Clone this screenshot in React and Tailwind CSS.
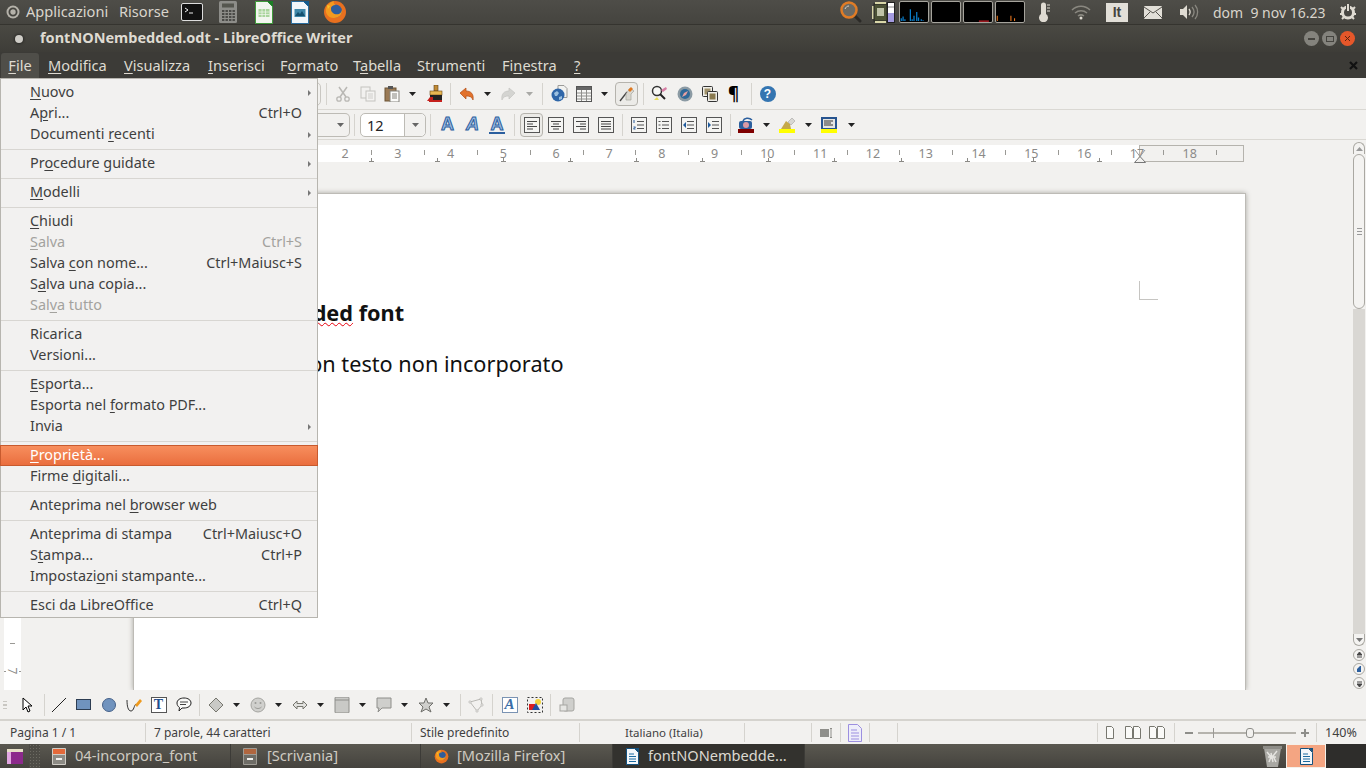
import React from 'react';

const Svg = ({ w = 16, h = 16, children, className = '' }) => (
  <svg width={w} height={h} viewBox={`0 0 ${w} ${h}`} className={`block shrink-0 ${className}`}>{children}</svg>
);

const Slot = ({ className = 'w-[25px]', children }) => (
  <div className={`flex h-full shrink-0 items-center justify-center ${className}`}>{children}</div>
);

const Caret = ({ color = '#222' }) => (
  <Svg w={7} h={4}><path d="M0 0h7L3.5 4z" fill={color} /></Svg>
);

const Sep = ({ className = '' }) => <div className={`h-[22px] w-px shrink-0 bg-[#d5d3ce] ${className}`} />;

/* ---- panel icons ---- */
const UbuntuGear = () => (
  <Svg w={14} h={14}>
    <circle cx="7" cy="7" r="6.5" fill="#b5b2aa" />
    <circle cx="7" cy="7" r="3.6" fill="none" stroke="#45443f" strokeWidth="1.8" />
  </Svg>
);
const Terminal = () => (
  <Svg w={22} h={18}>
    <rect x=".5" y=".5" width="21" height="17" rx="1.5" fill="#111" stroke="#ddd" />
    <path d="M4 5l3 2-3 2" fill="none" stroke="#eee" />
    <path d="M8 10h4" stroke="#eee" />
  </Svg>
);
const Calculator = () => (
  <Svg w={18} h={22}>
    <rect width="18" height="22" rx="1.5" fill="#8d8d89" />
    <rect x="3" y="2.5" width="12" height="4" fill="#55564f" />
    {[9, 12, 15, 18].map(y => [3, 6.5, 10, 13.5].map(x => <rect key={`${x}-${y}`} x={x} y={y} width="2.4" height="2" fill="#4a4a47" />))}
  </Svg>
);
const CalcDoc = () => (
  <Svg w={18} h={23}>
    <path d="M.5.5h12l5 5v17H.5z" fill="#f2f6ef" stroke="#3f9b3a" />
    <path d="M12 0h6v6z" fill="#1c7d26" />
    <rect x="3.5" y="8" width="11" height="8" fill="#a9d59c" />
    <path d="M3.5 11h11M3.5 13.5h11M7 8v8M10.500 8v8" stroke="#f4f8f0" strokeWidth=".7" />
  </Svg>
);
const ImpressDoc = () => (
  <Svg w={18} h={23}>
    <path d="M.5.5h12l5 5v17H.5z" fill="#f2f6fa" stroke="#2a6d9e" />
    <path d="M12 0h6v6z" fill="#155a8c" />
    <rect x="3.5" y="8" width="11" height="8" fill="#3f87a9" />
    <path d="M4 15l3-4 2 2 2-3 3 5z" fill="#14506f" />
  </Svg>
);
const WriterDoc = ({ w = 13, h = 17, line = '#1a6aa0' }) => (
  <svg width={w} height={h} viewBox="0 0 13 17" className="block shrink-0">
    <path d="M.5.5h8l4 4v12H.5z" fill="#f4f7fa" stroke="#14527f" />
    <path d="M8.500 0H13v4.500z" fill="#14527f" />
    <path d="M3 6h5M3 8.500h7M3 11h7M3 13.500h7" stroke={line} strokeWidth="1.200" />
  </svg>
);
const Firefox = ({ s = 24 }) => (
  <svg width={s} height={s} viewBox="0 0 24 24" className="block shrink-0">
    <circle cx="12" cy="12" r="11" fill="#e8701f" />
    <circle cx="12.500" cy="11" r="6.500" fill="#2f5d9b" />
    <path d="M3 9c1-4 4-7 8-8-1 2 0 3 2 4-3 0-5 1-5 4 0 4 4 6 8 5 2-1 3-3 3-5 1 5-3 9-8 9-6 0-9-5-8-9z" fill="#f39a1f" />
    <path d="M4 5c1 0 2 1 3 1L5 9z" fill="#f7c32a" />
  </svg>
);
const Search = () => (
  <Svg w={22} h={22}>
    <path d="M13 13l7 7" stroke="#2b2a27" strokeWidth="3" strokeLinecap="round" />
    <circle cx="9" cy="9" r="7.500" fill="#6b6a64" stroke="#e07c26" strokeWidth="2.500" />
    <path d="M5 8c1-2 2-3 4-3" stroke="#d8d5cc" fill="none" />
  </Svg>
);
const Chip = () => (
  <Svg w={23} h={21}>
    <rect x="0" y="4" width="2" height="13" fill="#d8d6a8" />
    <rect x="2" y="2" width="13" height="17" fill="#4c5236" stroke="#222" />
    <rect x="5" y="6" width="7" height="8" fill="#bfc3a8" />
    <rect x="3" y="0" width="11" height="2" fill="#d8d6a8" />
    <rect x="3" y="19" width="11" height="2" fill="#d8d6a8" />
    <rect x="15.500" y=".5" width="7" height="20" fill="#fff" stroke="#222" />
    <path d="M16 11h6v9h-6z" fill="#a49be0" />
    <path d="M16 5h6" stroke="#888" />
  </Svg>
);
const Graph = ({ children }) => (
  <svg width="30" height="22" viewBox="0 0 30 22" className="block shrink-0 rounded-[2px] border border-[#a5a39c] bg-black">{children}</svg>
);
const Thermo = () => (
  <Svg w={13} h={20}>
    <path d="M3 3a2.500 2.500 0 015 0v9a4.500 4.500 0 11-5 0z" fill="#dfdbd2" />
    <path d="M9 3h3M9 6h3M9 9h3" stroke="#dfdbd2" />
  </Svg>
);
const Wifi = () => (
  <Svg w={20} h={16}>
    <path d="M1 6c5-5 13-5 18 0M4 9c3.500-3 8.500-3 12 0M7 12c2-1.500 4-1.500 6 0" fill="none" stroke="#8a8880" strokeWidth="1.500" />
    <circle cx="10" cy="14" r="1.500" fill="#dfdbd2" />
  </Svg>
);
const Mail = () => (
  <Svg w={18} h={13}>
    <rect width="18" height="13" rx="1" fill="#e2dfd8" />
    <path d="M0 1l9 6 9-6M0 12l6-6M18 12l-6-6" fill="none" stroke="#55534d" />
  </Svg>
);
const Volume = () => (
  <Svg w={20} h={16}>
    <path d="M1 5h3l4-4v14l-4-4H1z" fill="#dfdbd2" />
    <path d="M10 5c1.500 2 1.500 4 0 6" stroke="#dfdbd2" strokeWidth="1.300" fill="none" />
    <path d="M13 3c2.500 3 2.500 7 0 10M16 1c3.500 4 3.500 10 0 14" stroke="#8a8880" strokeWidth="1.300" fill="none" />
  </Svg>
);
const Power = () => (
  <Svg w={18} h={18}>
    <circle cx="9" cy="9.500" r="5.500" fill="none" stroke="#dfdbd2" strokeWidth="3" />
    <path d="M9 1v7" stroke="#45443f" strokeWidth="4" />
    <path d="M9 1v7" stroke="#dfdbd2" strokeWidth="2" />
    <path d="M2 4l2 2M16 4l-2 2M1 11h2M15 11h2M3 16l2-2M15 16l-2-2" stroke="#dfdbd2" strokeWidth="2" />
  </Svg>
);

/* ---- toolbar icons ---- */
const Cut = () => (
  <Svg>
    <path d="M4 1l7 10M12 1L5 11" stroke="#b9b8b4" strokeWidth="1.500" />
    <circle cx="4" cy="13" r="2.200" fill="none" stroke="#b9b8b4" strokeWidth="1.300" />
    <circle cx="12" cy="13" r="2.200" fill="none" stroke="#b9b8b4" strokeWidth="1.300" />
  </Svg>
);
const Copy = () => (
  <Svg>
    <rect x="1" y="1" width="9" height="11" fill="#f2f1ef" stroke="#c4c3bf" />
    <rect x="6" y="5" width="9" height="10" fill="#f4f3f1" stroke="#c4c3bf" />
    <path d="M8 8h5M8 10h5M8 12h5" stroke="#cfcecb" />
  </Svg>
);
const Paste = () => (
  <Svg>
    <rect x="1" y="2" width="11" height="13" fill="#9a7a55" stroke="#6d5535" />
    <rect x="4" y="0" width="5" height="3" fill="#555" />
    <rect x="6" y="5" width="9" height="11" fill="#fbfbf9" stroke="#85837d" />
    <path d="M8 8h5M8 10h5M8 12h5" stroke="#85837d" />
  </Svg>
);
const Brush = () => (
  <Svg w={17} h={17}>
    <rect x="7" y="0" width="4" height="6" fill="#c08a35" stroke="#5d4018" strokeWidth=".6" />
    <rect x="3" y="6" width="12" height="4" fill="#e8b752" stroke="#6a4a1a" strokeWidth=".6" />
    <rect x="3" y="10" width="12" height="5" fill="#222" />
    <path d="M0 16l3-4h3v4z" fill="#c5201c" />
    <rect x="2" y="15" width="13" height="2" fill="#c5201c" />
  </Svg>
);
const Undo = ({ color = '#e2722c', dark = '#b24d15' }) => (
  <Svg>
    <path d="M1 7l6-5v3c5 0 8 3 7 9-1-3-3-4-7-4v3z" fill={color} stroke={dark} strokeWidth=".7" />
  </Svg>
);
const Globe = () => (
  <Svg w={17} h={17}>
    <path d="M7 .5h6l3 3v9H7z" fill="#f2f2f0" stroke="#9b9b98" />
    <circle cx="7" cy="10" r="6.500" fill="#2f66a8" />
    <path d="M3 8l3-2 2 2-2 3-2 0zM8 12l3-1 0 3-3 1z" fill="#9cc0df" />
  </Svg>
);
const TableIcon = () => (
  <Svg>
    <rect x=".5" y=".5" width="15" height="15" fill="#f7f7f5" stroke="#555" />
    <rect x="1" y="1" width="14" height="3" fill="#666" />
    <path d="M1 7h14M1 10h14M1 13h14M5.500 4v11M10.500 4v11" stroke="#8f8f8c" />
  </Svg>
);
const Draw = () => (
  <Svg>
    <path d="M1 15l7-9" stroke="#444" strokeWidth="1.300" />
    <path d="M7 8l4-6 4 3-3 3v6H7z" fill="#d9d7d0" stroke="#a5a39b" strokeWidth=".7" />
    <path d="M9 4l3-3 2 2-3 3z" fill="#e0781e" />
  </Svg>
);
const FindIcon = () => (
  <Svg w={17} h={17}>
    <circle cx="6" cy="6" r="4.500" fill="#f8f8f6" stroke="#333" strokeWidth="1.500" />
    <path d="M9 9l5 5" stroke="#222" strokeWidth="2" />
    <path d="M10 5l5-3 1 2-4 3z" fill="#d77fa5" />
    <path d="M6 12l-3 3h5z" fill="#e8dd5b" />
  </Svg>
);
const Compass = () => (
  <Svg>
    <circle cx="8" cy="8" r="7.500" fill="#8b9aa3" />
    <circle cx="8" cy="8" r="5" fill="#2f6897" />
    <path d="M11 5L9 9 5 11l2-4z" fill="#e9a0a0" />
  </Svg>
);
const Gallery = () => (
  <Svg>
    <rect x=".5" y=".5" width="10" height="10" rx="1" fill="#efeee9" stroke="#333" />
    <rect x="2.500" y="2.500" width="6" height="6" fill="#a0916a" />
    <rect x="5.500" y="5.500" width="10" height="10" rx="1" fill="#efeee9" stroke="#333" />
    <rect x="7.500" y="7.500" width="6" height="6" fill="#8a7a4f" />
  </Svg>
);
const Help = () => (
  <div className="flex h-4 w-4 items-center justify-center rounded-full bg-[#3475b1] font-['Liberation_Sans'] text-[12px] font-bold leading-none text-white">?</div>
);
const FontA = ({ variant }) => (
  <div className={`relative flex h-[18px] w-4 items-start justify-center font-['Liberation_Sans'] text-[18px] font-black leading-[16px] text-[#9dbce2] [-webkit-text-stroke:1px_#2c5f9e] ${variant === 'i' ? 'italic' : ''} ${variant === 'u' ? 'border-b-2 border-[#2c5f9e]' : ''}`}>A</div>
);
const AlignIcon = ({ kind }) => {
  const rows = [
    [3, 12], [3, 8], [3, 12], [3, 8],
  ];
  return (
    <Svg>
      <rect x=".5" y=".5" width="15" height="15" fill="#f4f4f2" stroke="#555" />
      {rows.map(([x, w], i) => {
        let rx = x;
        let rw = w - 2;
        if (kind === 'center') rx = 8 - rw / 2;
        if (kind === 'right') rx = 13 - rw;
        if (kind === 'full') rw = 10;
        return <rect key={i} x={rx} y={4 + i * 2.500} width={rw} height="1" fill="#444" />;
      })}
    </Svg>
  );
};
const ListIcon = ({ kind }) => (
  <Svg>
    <rect x=".5" y=".5" width="15" height="15" fill="#f4f4f2" stroke="#555" />
    <path d="M6 4.500h7M6 8h7M6 11.500h7" stroke="#555" />
    {kind === 'num' && <path d="M3 3v3M2.500 10h2l-2 2h2" stroke="#2c5f9e" fill="none" />}
    {kind === 'bul' && <path d="M2.500 4.500h2M2.500 8h2M2.500 11.500h2" stroke="#555" />}
    {kind === 'out' && <path d="M5 5v6L2 8z" fill="#1f5a9c" />}
    {kind === 'in' && <path d="M2 5v6l3-3z" fill="#1f5a9c" />}
  </Svg>
);
const CharColor = () => (
  <Svg>
    <rect x="0" y="12" width="16" height="4" fill="#7f0000" />
    <rect x="1" y="4" width="13" height="8" rx="2" fill="#2c5f9e" />
    <circle cx="8" cy="8" r="3" fill="#dc9aa5" />
    <path d="M5 4c1-3 6-4 9-1" stroke="#2c5f9e" fill="none" strokeWidth="1.500" />
  </Svg>
);
const Highlight = () => (
  <Svg>
    <rect x="0" y="12" width="16" height="4" fill="#ffff00" />
    <path d="M2 12l5-8 4 3 1 5z" fill="#c5a94a" />
    <path d="M9 5l4-4 3 3-4 4z" fill="#d8d7d2" stroke="#999" strokeWidth=".5" />
  </Svg>
);
const ParaBg = () => (
  <Svg>
    <rect x="0" y="12" width="16" height="4" fill="#ffff00" />
    <rect x="0" y="0" width="16" height="12" fill="#27548f" />
    <rect x="2" y="2" width="12" height="9" fill="#e5e5e3" />
    <path d="M3 4h9M3 6h7M3 8h9" stroke="#333" />
  </Svg>
);

/* ---- drawing bar ---- */
const Pointer = () => <Svg><path d="M3 1v12l3-3 2 5 2-1-2-5h4z" fill="#fff" stroke="#000" /></Svg>;
const LineI = () => <Svg><path d="M1 15L15 1" stroke="#222" /></Svg>;
const RectI = () => <Svg><rect x=".5" y="2.500" width="14" height="10" fill="#7093be" stroke="#2d3d52" /></Svg>;
const Ellipse = () => <Svg><circle cx="8" cy="8" r="6.500" fill="#7093be" stroke="#46628a" /></Svg>;
const Curve = () => (
  <Svg>
    <path d="M1 3c0 6 1 11 4 11s3-6 5-7" fill="none" stroke="#333" />
    <path d="M9 8l5-6 2 2-5 6z" fill="#ee9a1e" />
  </Svg>
);
const TextBox = () => (
  <div className="flex h-4 w-4 items-center justify-center border border-[#555] bg-white font-['Liberation_Serif'] text-[14px] font-bold leading-none text-[#1e4d8c]">T</div>
);
const Callout = () => (
  <Svg>
    <path d="M8 1c4 0 7 2 7 5s-3 5-7 5H6l-3 3 .5-3.500C2 9.500 1 8 1 6c0-3 3-5 7-5z" fill="#fafaf8" stroke="#222" />
    <path d="M4 5h8M4 7.500h6" stroke="#444" />
  </Svg>
);
const Diamond = () => <Svg><path d="M8 1l7 7-7 7-7-7z" fill="#c9c9c6" stroke="#77776f" /></Svg>;
const Smiley = () => (
  <Svg>
    <circle cx="8" cy="8" r="7" fill="#d0d0cd" stroke="#a5a5a1" />
    <circle cx="5.500" cy="6" r="1" fill="#9a9a96" />
    <circle cx="10.500" cy="6" r="1" fill="#9a9a96" />
    <path d="M4.500 10c2 2 5 2 7 0" fill="none" stroke="#9a9a96" />
  </Svg>
);
const DblArrow = () => <Svg><path d="M1 8l4-4v2.500h6V4l4 4-4 4V9.500H5V12z" fill="#e2e2df" stroke="#77776f" /></Svg>;
const Flow = () => (
  <Svg>
    <rect x="1" y="0" width="14" height="16" rx="1" fill="#c9c9c6" stroke="#8e8e8a" />
    <path d="M1 3h14" stroke="#8e8e8a" />
  </Svg>
);
const BubbleGrey = () => <Svg><path d="M1 1h14v10H6l-4 4 1-4H1z" fill="#cfcfcc" stroke="#8e8e8a" /></Svg>;
const Star = () => <Svg><path d="M8 1l2 5h5l-4 4 2 5-5-3-5 3 2-5-4-4h5z" fill="#cfcfcc" stroke="#6e6e6a" /></Svg>;
const Points = () => (
  <Svg>
    <path d="M2 5l11-3 1 6-5 6z" fill="none" stroke="#b9b8b4" />
    <path d="M1 4h2v2H1zM12 1h2v2h-2zM13 7h2v2h-2zM8 13h2v2H8z" fill="#f2f1ef" stroke="#a5a5a1" strokeWidth=".5" />
  </Svg>
);
const Fontwork = () => (
  <div className="flex h-4 w-4 items-center justify-center border border-[#7a93b3] bg-white font-['Liberation_Serif'] text-[15px] font-bold italic leading-none text-[#3a6ea8]">A</div>
);
const ImageI = () => (
  <Svg>
    <rect x=".5" y=".5" width="15" height="15" fill="none" stroke="#333" strokeDasharray="2 2" />
    <circle cx="11" cy="5" r="3" fill="#f2d43a" />
    <rect x="2" y="7" width="6" height="6" fill="#d81e1e" />
    <path d="M5 13l4-7 4 7z" fill="#2050a0" />
  </Svg>
);
const Extrude = () => (
  <Svg>
    <rect x="4" y="1" width="11" height="13" rx="2" fill="#cfcfcc" stroke="#a5a5a1" />
    <rect x="1" y="8" width="7" height="6" fill="#e6e6e3" stroke="#a5a5a1" />
  </Svg>
);

const Mn = ({ children }) => <span className="underline decoration-1 underline-offset-2">{children}</span>;

const MenuRow = ({ children, hint, arrow, off, active }) => (
  <div className={`flex h-[21px] items-center pl-[29px] pr-[15px] ${off ? 'text-[#a3a29e]' : active ? 'text-white' : 'text-[#3f3f3f]'} ${active ? '-mx-px bg-gradient-to-b from-[#f8905f] to-[#e96c3c] pl-[30px] shadow-[inset_0_0_0_1px_#c75a2e]' : ''}`}>
    <span className="flex-1 whitespace-nowrap">{children}</span>
    {hint && <span className="whitespace-nowrap">{hint}</span>}
    {arrow && <span className="-mr-[9px] h-0 w-0 border-y-[3px] border-l-[3px] border-y-transparent border-l-[#777]" />}
  </div>
);
const MenuSep = () => <div className="my-[3.5px] h-px bg-[#d8d6d2]" />;

const FileMenu = () => (
  <div className="absolute left-0 top-[78px] z-20 h-[540px] w-[318px] border border-[#b7b5af] bg-[#f2f1f0] pt-[3px] text-[14.4px] leading-none">
    <MenuRow arrow><Mn>N</Mn>uovo</MenuRow>
    <MenuRow hint="Ctrl+O">A<Mn>p</Mn>ri...</MenuRow>
    <MenuRow arrow>Documenti <Mn>r</Mn>ecenti</MenuRow>
    <MenuSep />
    <MenuRow arrow>Pr<Mn>o</Mn>cedure guidate</MenuRow>
    <MenuSep />
    <MenuRow arrow><Mn>M</Mn>odelli</MenuRow>
    <MenuSep />
    <MenuRow><Mn>C</Mn>hiudi</MenuRow>
    <MenuRow off hint="Ctrl+S"><Mn>S</Mn>alva</MenuRow>
    <MenuRow hint="Ctrl+Maiusc+S">Salva <Mn>c</Mn>on nome...</MenuRow>
    <MenuRow>S<Mn>a</Mn>lva una copia...</MenuRow>
    <MenuRow off>Sal<Mn>v</Mn>a tutto</MenuRow>
    <MenuSep />
    <MenuRow>Ricarica</MenuRow>
    <MenuRow>Versioni...</MenuRow>
    <MenuSep />
    <MenuRow><Mn>E</Mn>sporta...</MenuRow>
    <MenuRow>Esporta nel <Mn>f</Mn>ormato PDF...</MenuRow>
    <MenuRow arrow>Invia</MenuRow>
    <MenuSep />
    <MenuRow active><Mn>P</Mn>roprietà...</MenuRow>
    <MenuRow>Firme <Mn>d</Mn>igitali...</MenuRow>
    <MenuSep />
    <MenuRow>Anteprima nel <Mn>b</Mn>rowser web</MenuRow>
    <MenuSep />
    <MenuRow hint="Ctrl+Maiusc+O">Anteprima di stampa</MenuRow>
    <MenuRow hint="Ctrl+P">S<Mn>t</Mn>ampa...</MenuRow>
    <MenuRow>Impostazi<Mn>o</Mn>ni stampante...</MenuRow>
    <MenuSep />
    <MenuRow hint="Ctrl+Q">Esci da LibreOffice</MenuRow>
  </div>
);

const TopPanel = () => (
  <div className="flex h-[25px] shrink-0 items-center border-b border-[#35342f] bg-gradient-to-b from-[#4e4d48] to-[#45443f] text-[14.6px] text-[#d9d5cc]">
    <Slot className="w-[26px]"><UbuntuGear /></Slot>
    <span className="w-[93px]">Applicazioni</span>
    <span className="w-[62px]">Risorse</span>
    <Slot className="w-[22px]"><Terminal /></Slot>
    <Slot className="ml-[15px] w-[20px]"><Calculator /></Slot>
    <Slot className="ml-[16px] w-[20px]"><CalcDoc /></Slot>
    <Slot className="ml-[16px] w-[20px]"><ImpressDoc /></Slot>
    <Slot className="ml-[13px] w-[24px]"><Firefox /></Slot>
    <div className="flex-1" />
    <Slot className="w-[22px]"><Search /></Slot>
    <Slot className="ml-[10px] w-[23px]"><Chip /></Slot>
    <div className="ml-[4px] flex gap-[2px]">
      <Graph><path d="M1 21V18M3 21v-5M5 21v-2M11 21V8M13 21v-2M15 21v-6M18 21V11M20 21v-4M23 21v-2M25 21v-1" stroke="#0a7dc9" strokeWidth="1.400" /></Graph>
      <Graph />
      <Graph><path d="M16 21h11" stroke="#c8202a" strokeWidth="1.500" /></Graph>
      <Graph><path d="M1 21v-6M16 21v-6M20 21v-3" stroke="#e8761e" strokeWidth="1.200" /></Graph>
    </div>
    <Slot className="ml-[13px] w-[13px]"><Thermo /></Slot>
    <Slot className="ml-[20px] w-[20px]"><Wifi /></Slot>
    <div className="ml-[15px] flex h-[19px] w-[22px] items-center justify-center bg-[#e2dfd8] font-['Liberation_Sans'] text-[14px] font-bold text-[#45443f]">It</div>
    <Slot className="ml-[16px] w-[18px]"><Mail /></Slot>
    <Slot className="ml-[17px] w-[20px]"><Volume /></Slot>
    <span className="ml-[14px] w-[123px] whitespace-nowrap text-[14px]">dom&nbsp; 9 nov 16.23</span>
    <Slot className="ml-[3px] w-[18px]"><Power /></Slot>
    <div className="w-[9px]" />
  </div>
);

const WinBtn = ({ className, children }) => (
  <div className={`flex h-[15px] w-[15px] items-center justify-center rounded-full ${className}`}>{children}</div>
);

const TitleBar = () => (
  <div className="flex h-[27px] shrink-0 items-center bg-gradient-to-b from-[#4a4943] to-[#3e3d38] text-[14.5px] font-bold text-[#dfdbd2]">
    <div className="ml-[15px] h-[8px] w-[8px] rounded-full bg-[#cfcdc7] shadow-[0_0_3px_#111]" />
    <span className="ml-[17px] flex-1 pb-[2px]">fontNONembedded.odt - LibreOffice Writer</span>
    <div className="mr-[11px] flex gap-[3px]">
      <WinBtn className="bg-[#84837d]"><div className="h-[2px] w-[7px] bg-[#45443f]" /></WinBtn>
      <WinBtn className="bg-[#84837d]"><div className="h-[6px] w-[8px] border border-[#45443f]" /></WinBtn>
      <WinBtn className="bg-[#e5572a]">
        <Svg w={7} h={7}><path d="M1 1l5 5M6 1L1 6" stroke="#5a2410" /></Svg>
      </WinBtn>
    </div>
  </div>
);

const MenuBar = () => (
  <div className="flex h-[26px] shrink-0 items-end bg-[#3c3b37] text-[14.6px] leading-none text-[#dfdbd2]">
    <div className="ml-[1px] flex h-[25px] w-[38px] items-center justify-center rounded-t-[3px] bg-[#4f4e49]"><span><Mn>F</Mn>ile</span></div>
    <span className="ml-[9px] w-[76px] self-center"><Mn>M</Mn>odifica</span>
    <span className="w-[84px] self-center"><Mn>V</Mn>isualizza</span>
    <span className="w-[72px] self-center"><Mn>I</Mn>nserisci</span>
    <span className="w-[73px] self-center">F<Mn>o</Mn>rmato</span>
    <span className="w-[64px] self-center">T<Mn>a</Mn>bella</span>
    <span className="w-[85px] self-center">Strumenti</span>
    <span className="w-[72px] self-center">Fi<Mn>n</Mn>estra</span>
    <span className="flex-1 self-center"><Mn>?</Mn></span>
    <Svg w={9} h={9} className="mr-[8px] self-center"><path d="M1 1l7 7M8 1L1 8" stroke="#111" strokeWidth="2.200" /></Svg>
  </div>
);

const ToolbarOne = () => (
  <div className="flex h-[32px] shrink-0 items-center border-b border-[#dad8d3] bg-[#f2f1ef]">
    <div className="ml-[309px] h-[24px] w-[12px] rounded-r-[5px] border border-[#c9c7c2]" />
    <Sep className="ml-[5px]" />
    <Slot className="ml-[3px] w-[25px]"><Cut /></Slot>
    <Slot><Copy /></Slot>
    <Slot className="w-[24px]"><Paste /></Slot>
    <Slot className="w-[16px]"><Caret /></Slot>
    <Slot className="ml-[3px] w-[25px]"><Brush /></Slot>
    <Sep className="ml-[2px]" />
    <Slot className="ml-[3px] w-[25px]"><Undo /></Slot>
    <Slot className="w-[16px]"><Caret /></Slot>
    <Slot className="w-[26px]"><div className="-scale-x-100"><Undo color="#d4d4d1" dark="#c4c4c1" /></div></Slot>
    <Slot className="w-[16px]"><Caret color="#a9a9a6" /></Slot>
    <Sep className="ml-[5px]" />
    <Slot className="ml-[4px] w-[25px]"><Globe /></Slot>
    <Slot className="w-[23px]"><TableIcon /></Slot>
    <Slot className="w-[18px]"><Caret /></Slot>
    <div className="ml-[2px] flex h-[24px] w-[23px] items-center justify-center rounded-[4px] border border-[#b5b3ad] bg-[#ecebe8]"><Draw /></div>
    <Sep className="ml-[5px]" />
    <Slot className="ml-[3px] w-[25px]"><FindIcon /></Slot>
    <Slot><Compass /></Slot>
    <Slot><Gallery /></Slot>
    <Slot className="w-[23px] text-[17px] font-bold text-black">¶</Slot>
    <Sep className="ml-[6px]" />
    <Slot className="ml-[3px] w-[25px]"><Help /></Slot>
  </div>
);

const SizeBox = () => (
  <div className="ml-[5px] flex h-[24px] w-[66px] rounded-[5px] border border-[#bdbbb5] bg-white">
    <span className="w-[43px] pl-[6px] text-[14.5px] leading-[22px] text-[#222]">12</span>
    <div className="flex flex-1 items-center justify-center rounded-r-[5px] border-l border-[#bdbbb5] bg-[#f2f1ef]"><Caret color="#666" /></div>
  </div>
);

const ToolbarTwo = () => (
  <div className="flex h-[30px] shrink-0 items-center border-b border-[#dad8d3] bg-[#f2f1ef]">
    <div className="ml-[318px] flex h-[24px] w-[32px] items-center justify-center rounded-r-[5px] border border-l-0 border-[#bdbbb5] bg-[#f2f1ef] pl-[14px]"><Caret color="#666" /></div>
    <Sep className="ml-[4px]" />
    <SizeBox />
    <Sep className="ml-[4px]" />
    <Slot className="ml-[4px] w-[25px]"><FontA /></Slot>
    <Slot><FontA variant="i" /></Slot>
    <Slot className="w-[24px]"><FontA variant="u" /></Slot>
    <Sep className="ml-[5px]" />
    <div className="ml-[5px] flex h-[24px] w-[23px] items-center justify-center rounded-[4px] border border-[#b5b3ad] bg-[#ecebe8]"><AlignIcon kind="left" /></div>
    <Slot><AlignIcon kind="center" /></Slot>
    <Slot><AlignIcon kind="right" /></Slot>
    <Slot><AlignIcon kind="full" /></Slot>
    <Sep className="ml-[4px]" />
    <Slot className="ml-[3px] w-[25px]"><ListIcon kind="num" /></Slot>
    <Slot><ListIcon kind="bul" /></Slot>
    <Slot><ListIcon kind="out" /></Slot>
    <Slot><ListIcon kind="in" /></Slot>
    <Sep className="ml-[4px]" />
    <Slot className="ml-[2px] w-[25px]"><CharColor /></Slot>
    <Slot className="w-[16px]"><Caret /></Slot>
    <Slot className="w-[26px]"><Highlight /></Slot>
    <Slot className="w-[16px]"><Caret /></Slot>
    <Slot className="w-[26px]"><ParaBg /></Slot>
    <Slot className="w-[18px]"><Caret /></Slot>
  </div>
);

const rulerNums = [2, 3, 4, 5, 6, 7, 8, 9, 10, 11, 12, 13, 14, 15, 16, 17, 18];
const halfTicks = Array.from({ length: 17 }, (_, i) => 238.4 + i * 52.8);
const tabStops = Array.from({ length: 12 }, (_, i) => 238 + i * 66.2);

const HRuler = () => (
  <div className="ml-[133px] mt-[5px] h-[17px] w-[1111px] shrink-0">
    <div className="relative flex h-full bg-white pl-[185.6px] text-[12.5px] leading-[17px] text-[#8b8a88]">
      <div className="absolute bottom-0 right-0 top-0 w-[105px] border border-[#b5b3ad] bg-[#f2f1ef]" />
      {rulerNums.map(n => (
        <span key={n} className="relative w-[52.8px] shrink-0 text-center">{n}</span>
      ))}
      <svg width="1111" height="20" viewBox="0 0 1111 20" className="absolute left-0 top-0">
        {halfTicks.map(x => <path key={x} d={`M${Math.round(x)}.5 5v5`} stroke="#9a9995" />)}
        {tabStops.map(x => <path key={x} d={`M${Math.round(x)}.5 13v4M${Math.round(x) - 2} 16.500h5`} stroke="#8b8a86" />)}
        <path d="M1001.500 17.500h11l-5.500-6z" fill="#f2f1ef" stroke="#777" />
        <path d="M1002 5l5 6.500 5-6.500" fill="none" stroke="#999" />
      </svg>
    </div>
  </div>
);

const VRuler = () => (
  <div className="ml-[4px] flex h-full w-[17px] shrink-0 flex-col items-center justify-end bg-white pb-[13px] text-[12px] leading-none text-[#8b8a88]">
    <div className="mb-[21px] h-px w-[5px] bg-[#9a9995]" />
    <div className="flex w-full items-center justify-between">
      <div className="h-px w-[2px] bg-[#9a9995]" />
      <span className="rotate-90">7</span>
      <div className="h-px w-[2px] bg-[#9a9995]" />
    </div>
  </div>
);

const ScrollBtn = ({ children }) => (
  <div className="flex h-[12px] w-[12px] items-center justify-center rounded-full border border-[#aaa8a2] bg-[#f4f3f1]">{children}</div>
);

const ScrollBar = () => (
  <div className="mr-[1px] mt-[2px] flex w-[12px] shrink-0 flex-col">
    <div className="flex h-[12px] items-center justify-center rounded-t-[6px] border border-b-0 border-[#aaa8a2] bg-[#f4f3f1]">
      <Svg w={7} h={4}><path d="M3.500 0L7 4H0z" fill="#999" /></Svg>
    </div>
    <div className="flex h-[155px] items-center justify-center rounded-[6px] border border-[#aaa8a2] bg-[#f4f3f1]">
      <div className="h-[7px] w-[5px] border-y border-[#999] bg-[linear-gradient(#f4f3f1_40%,#999_40%,#999_60%,#f4f3f1_60%)]" />
    </div>
    <div className="flex-1 bg-[#d9d7d3]" />
    <div className="flex h-[12px] items-center justify-center rounded-b-[6px] border border-t-0 border-[#aaa8a2] bg-[#f4f3f1]">
      <Svg w={7} h={4}><path d="M0 0h7L3.500 4z" fill="#777" /></Svg>
    </div>
    <div className="flex flex-col gap-[2px] pb-[1px] pt-[3px]">
      <ScrollBtn><Svg w={5} h={7}><path d="M2.500 0L5 3H0zM0 5h5" stroke="#444" fill="#444" /></Svg></ScrollBtn>
      <ScrollBtn><Svg w={6} h={7}><path d="M1 6V3l3-3h1v6z" fill="#2c5f9e" /></Svg></ScrollBtn>
      <ScrollBtn><Svg w={5} h={7}><path d="M0 2h5M0 4h5L2.500 7z" stroke="#444" fill="#444" /></Svg></ScrollBtn>
    </div>
  </div>
);

const Workspace = () => (
  <div className="flex min-h-0 flex-1 bg-[#f2f1ef]">
    <div className="flex min-w-0 flex-1 flex-col">
      <HRuler />
      <div className="flex min-h-0 flex-1">
        <VRuler />
        <div className="ml-[112px] mt-[31px] w-[1113px] shrink-0 border-x border-t border-[#bdbbb6] bg-white text-[21.7px] leading-[28px] text-[#111] shadow-[0_0_5px_#a8a6a0]">
          <div className="ml-[1005px] mt-[87px] h-[19px] w-[19px] border-b border-l border-[#c6c5c2]" />
          <p className="ml-[105px] -mt-px font-bold">Embed<span className="underline decoration-wavy decoration-red-600 decoration-1">ded</span> font</p>
          <p className="ml-[105px] mt-[23px]">Testo con testo non incorporato</p>
        </div>
      </div>
    </div>
    <ScrollBar />
  </div>
);

const DrawBar = () => (
  <div className="relative flex h-[31px] shrink-0 items-center border-b-2 border-[#d5d3ce] bg-[#f2f1ef]">
    <div className="ml-[3px] h-[8px] w-[4px] border-y border-[#c9c7c2] bg-[linear-gradient(#f2f1ef_40%,#c9c7c2_40%,#c9c7c2_60%,#f2f1ef_60%)]" />
    <Slot className="ml-[8px] w-[25px]"><Pointer /></Slot>
    <Sep className="ml-[4px]" />
    <Slot className="ml-[1px] w-[25px]"><LineI /></Slot>
    <Slot><RectI /></Slot>
    <Slot><Ellipse /></Slot>
    <Slot><Curve /></Slot>
    <Slot><TextBox /></Slot>
    <Slot><Callout /></Slot>
    <Sep className="ml-[3px]" />
    <Slot className="ml-[3px] w-[25px]"><Diamond /></Slot>
    <Slot className="w-[17px]"><Caret /></Slot>
    <Slot className="w-[25px]"><Smiley /></Slot>
    <Slot className="w-[17px]"><Caret /></Slot>
    <Slot className="w-[25px]"><DblArrow /></Slot>
    <Slot className="w-[17px]"><Caret /></Slot>
    <Slot className="w-[25px]"><Flow /></Slot>
    <Slot className="w-[17px]"><Caret /></Slot>
    <Slot className="w-[25px]"><BubbleGrey /></Slot>
    <Slot className="w-[17px]"><Caret /></Slot>
    <Slot className="w-[25px]"><Star /></Slot>
    <Slot className="w-[17px]"><Caret /></Slot>
    <Sep className="ml-[5px]" />
    <Slot className="ml-[2px] w-[25px]"><Points /></Slot>
    <Sep className="ml-[4px]" />
    <Slot className="ml-[4px] w-[25px]"><Fontwork /></Slot>
    <Slot><ImageI /></Slot>
    <Sep className="ml-[3px]" />
    <Slot className="ml-[3px] w-[25px]"><Extrude /></Slot>
  </div>
);

const Cell = ({ className, children }) => (
  <div className={`flex h-[19px] shrink-0 items-center border-r border-[#d5d3ce] ${className}`}>{children}</div>
);

const PageIcon = ({ className = '' }) => (
  <Svg w={8} h={13} className={className}><path d="M.5.5h5l2 2v10h-7z" fill="#fafaf8" stroke="#77776f" /></Svg>
);

const StatusBar = () => (
  <div className="flex h-[23px] shrink-0 items-center bg-[#f2f1ef] text-[12px] leading-none text-[#3f3f3f]">
    <Cell className="w-[146px] pl-[10px]">Pagina 1 / 1</Cell>
    <Cell className="w-[266px] pl-[8px]">7 parole, 44 caratteri</Cell>
    <Cell className="w-[168px] pl-[8px]">Stile predefinito</Cell>
    <Cell className="w-[165px] pl-[45px] text-[11.5px]">Italiano (Italia)</Cell>
    <Cell className="w-[67px]" />
    <Cell className="w-[29px] justify-center">
      <Svg w={12} h={12}><rect y="2" width="9" height="8" fill="#8e8e8a" /><path d="M10 1.500h2M11 1.500v9M10 10.500h2" stroke="#8e8e8a" /></Svg>
    </Cell>
    <Cell className="w-[29px] justify-center">
      <Svg w={14} h={18}><path d="M.5.5h9l4 4v13H.5z" fill="#eeeefa" stroke="#9c8fe0" /><path d="M3 6h6M3 9h8M3 12h8M3 15h8" stroke="#9c8fe0" /></Svg>
    </Cell>
    <Cell className="w-[28px]" />
    <Cell className="w-[200px]" />
    <Cell className="w-[77px] pl-[8px]">
      <PageIcon />
      <div className="ml-[11px] flex"><PageIcon /><PageIcon /></div>
      <div className="ml-[8px] flex"><PageIcon /><PageIcon /></div>
    </Cell>
    <Cell className="w-[142px] gap-[5px] pl-[10px]">
      <div className="h-[2px] w-[8px] bg-[#8e8e8a]" />
      <div className="relative flex h-[10px] w-[98px] items-center">
        <div className="h-[2px] w-full bg-[#b5b3ad]" />
        <div className="absolute left-[15px] h-[10px] w-px bg-[#9a9995]" />
        <div className="absolute left-[48px] h-[10px] w-[8px] rounded-[3px] border border-[#8e8e8a] bg-[#f2f1ef]" />
      </div>
      <Svg w={8} h={8}><path d="M4 0v8M0 4h8" stroke="#8e8e8a" strokeWidth="2" /></Svg>
    </Cell>
    <span className="pl-[8px] pt-[1px] text-[12.5px]">140%</span>
  </div>
);

const DrawerIcon = ({ dim }) => (
  <Svg w={14} h={17}>
    <rect width="14" height="17" rx="1" fill={dim ? '#9e9b94' : '#cfccc5'} />
    <rect x="1" y="1" width="12" height="5" fill={dim ? '#b0663f' : '#e4693a'} />
    <rect x="1" y="7" width="12" height="9" fill={dim ? '#6e6c66' : '#8d8b85'} />
    <rect x="4" y="10" width="6" height="2" fill="#f2f1ef" />
  </Svg>
);

const TaskItem = ({ className, icon, label, active }) => (
  <div className={`flex h-full shrink-0 items-center border-r border-[#3c3b37] text-[14.6px] ${active ? 'bg-[#33322e] text-[#dcd9d1]' : 'text-[#cfcbc2]'} ${className}`}>
    {icon}
    <span className="whitespace-nowrap">{label}</span>
  </div>
);

const TaskBar = () => (
  <div className="flex h-[24px] shrink-0 items-center bg-gradient-to-b from-[#5a5850] to-[#45433e]">
    <Slot className="ml-[7px] w-[16px]">
      <Svg w={16} h={15}><rect width="16" height="15" fill="#8c2a8c" /><rect y="0" width="16" height="3" fill="#e6e0c8" /><rect x="0" y="3" width="4" height="12" fill="#e2a7e2" /></Svg>
    </Slot>
    <div className="ml-[6px] h-full w-[11px] bg-[#4e4c46] bg-[radial-gradient(#6d6b63_1px,transparent_1px)] bg-[length:3px_3px]" />
    <TaskItem className="ml-[11px] w-[180px] gap-[9px] pl-[1px]" icon={<DrawerIcon />} label="04-incorpora_font" />
    <TaskItem className="w-[190px] gap-[10px] pl-[12px]" icon={<DrawerIcon dim />} label="[Scrivania]" />
    <TaskItem className="w-[192px] gap-[8px] pl-[13px]" icon={<Firefox s={15} />} label="[Mozilla Firefox]" />
    <TaskItem active className="w-[192px] gap-[9px] pl-[13px]" icon={<WriterDoc />} label="fontNONembedde..." />
    <div className="flex-1" />
    <Svg w={21} h={23} className="mr-[3px]">
      <path d="M2 3h17l-3 19H5z" fill="#a9a8a3" />
      <path d="M1 1h19v3H1z" fill="#8e8d88" />
      <path d="M5 7l4 5-2 5M15 6l-4 5 3 6M9 8l2 9M6 12h8" stroke="#e5e4e0" strokeWidth="1.500" fill="none" />
    </Svg>
    <div className="flex h-full w-[40px] items-center justify-center border border-[#f4f0ea] bg-[#f4a582]"><WriterDoc /></div>
    <div className="h-full w-[40px] bg-[#2e2d2b]" />
  </div>
);

export default function App() {
  return (
    <div className="relative flex h-[768px] w-[1366px] flex-col overflow-hidden bg-[#f2f1ef] font-['Noto_Sans',sans-serif]">
      <TopPanel />
      <TitleBar />
      <MenuBar />
      <ToolbarOne />
      <ToolbarTwo />
      <Workspace />
      <DrawBar />
      <StatusBar />
      <TaskBar />
      <FileMenu />
    </div>
  );
}
